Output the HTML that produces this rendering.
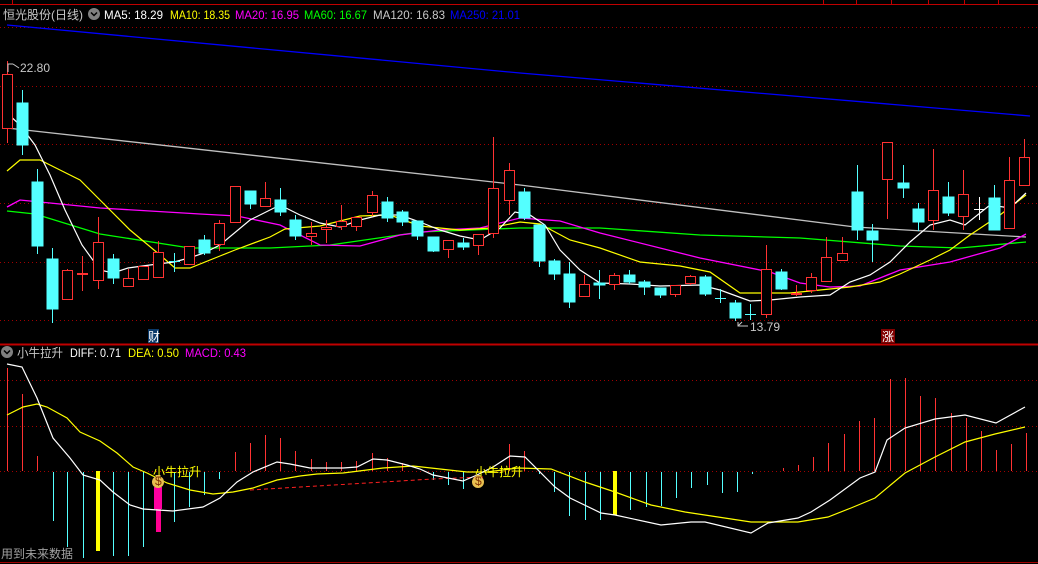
<!DOCTYPE html>
<html><head><meta charset="utf-8"><style>
html,body{margin:0;padding:0;background:#000;width:1038px;height:564px;overflow:hidden}
svg{display:block}
text{font-family:"Liberation Sans","Noto Sans CJK SC",sans-serif;font-size:12px}
</style></head><body>
<svg width="1038" height="564" viewBox="0 0 1038 564" xmlns="http://www.w3.org/2000/svg">
<rect width="1038" height="564" fill="#000"/>
<line x1="0" y1="4.5" x2="1038" y2="4.5" stroke="#c00000" stroke-width="1"/>
<g stroke="#c00000"><line x1="12.5" y1="0" x2="12.5" y2="4"/><line x1="823.5" y1="0" x2="823.5" y2="4"/><line x1="856.5" y1="0" x2="856.5" y2="4"/><line x1="891.5" y1="0" x2="891.5" y2="4"/><line x1="928.5" y1="0" x2="928.5" y2="4"/><line x1="964.5" y1="0" x2="964.5" y2="4"/><line x1="998.5" y1="0" x2="998.5" y2="4"/></g>
<line x1="0" y1="344.5" x2="1038" y2="344.5" stroke="#c00000" stroke-width="2"/>
<line x1="0" y1="562.5" x2="1038" y2="562.5" stroke="#a00000" stroke-width="1"/>
<g stroke="#a00000" stroke-dasharray="1,3" stroke-width="1">
<line x1="0" y1="27.5" x2="1038" y2="27.5"/><line x1="0" y1="86.5" x2="1038" y2="86.5"/><line x1="0" y1="144.5" x2="1038" y2="144.5"/><line x1="0" y1="203.5" x2="1038" y2="203.5"/><line x1="0" y1="262.5" x2="1038" y2="262.5"/><line x1="0" y1="320.5" x2="1038" y2="320.5"/>
<line x1="0" y1="380.5" x2="1038" y2="380.5"/><line x1="0" y1="426.5" x2="1038" y2="426.5"/><line x1="0" y1="471.5" x2="1038" y2="471.5"/>
</g>
<text x="3" y="19" fill="#c8c8c8" font-size="13" textLength="80" lengthAdjust="spacingAndGlyphs">恒光股份(日线)</text>
<circle cx="94" cy="14" r="6" fill="#808080"/><path d="M91 12.5 L94 15.5 L97 12.5" stroke="#000" stroke-width="1.5" fill="none"/>
<text x="104" y="19" fill="#fff" textLength="59" lengthAdjust="spacingAndGlyphs">MA5: 18.29</text>
<text x="170" y="19" fill="#ffff00" textLength="60" lengthAdjust="spacingAndGlyphs">MA10: 18.35</text>
<text x="235" y="19" fill="#ff00ff" textLength="64" lengthAdjust="spacingAndGlyphs">MA20: 16.95</text>
<text x="304" y="19" fill="#00ff00" textLength="63" lengthAdjust="spacingAndGlyphs">MA60: 16.67</text>
<text x="373" y="19" fill="#c8c8c8" textLength="72" lengthAdjust="spacingAndGlyphs">MA120: 16.83</text>
<text x="450" y="19" fill="#0000ff" textLength="70" lengthAdjust="spacingAndGlyphs">MA250: 21.01</text>
<polyline fill="none" stroke="#0000ff" stroke-width="1.3" points="7,25 520,73 1030,116"/>
<polyline fill="none" stroke="#c0c0c0" stroke-width="1.3" points="7,128 520,185 855,227 1026,237"/>
<polyline fill="none" stroke="#00ff00" stroke-width="1.3" points="7,211 35,214 100,234 190,248 270,248 330,245 420,232 520,228 600,228 700,235 800,238 900,246 960,248 1026,242"/>
<polyline fill="none" stroke="#ff00ff" stroke-width="1.3" points="7,207 20,200 60,204 100,208 200,214 237,216 280,225 320,245 360,246 400,235 440,230 480,228 520,218 560,221 600,233 700,258 770,272 800,283 830,287 860,286 900,270 950,262 1000,248 1026,234"/>
<polyline fill="none" stroke="#ffff00" stroke-width="1.2" points="7,171 20,160 40,160 60,170 80,180 100,200 130,230 160,255 175,268 190,268 220,256 235,250 270,237 285,229 320,226 360,216 390,215 420,226 460,230 490,228 520,222 540,224 570,240 600,248 640,262 680,266 710,272 740,293 790,293 820,290 850,287 880,282 900,274 930,260 950,250 970,235 1000,215 1026,195"/>
<polyline fill="none" stroke="#ffffff" stroke-width="1.2" points="7,113 20,125 35,145 50,175 65,210 82,245 100,270 113,273 128,268 150,265 174,262 189,258 204,253 220,245 250,220 280,205 300,215 320,223 340,227 360,220 380,215 400,215 420,222 440,230 460,236 480,240 500,228 515,212 530,215 545,225 560,250 580,270 600,283 630,284 660,286 700,285 720,290 750,301 770,300 800,297 830,295 850,282 870,275 890,262 910,242 930,225 950,220 965,225 990,205 1010,208 1026,193"/>
<g stroke="#ff3232" stroke-width="1" fill="#000">
<line x1="7.5" y1="61" x2="7.5" y2="143"/><rect x="2.5" y="74.5" width="10" height="54"/>
<line x1="67.5" y1="269" x2="67.5" y2="299"/><rect x="62.5" y="270.5" width="10" height="29"/>
<line x1="82.5" y1="256" x2="82.5" y2="291"/><rect x="77.5" y="273.5" width="10" height="1"/>
<line x1="98.5" y1="217" x2="98.5" y2="289"/><rect x="93.5" y="242.5" width="10" height="38"/>
<line x1="128.5" y1="269" x2="128.5" y2="286"/><rect x="123.5" y="278.5" width="10" height="8"/>
<rect x="138.5" y="266.5" width="10" height="13"/>
<line x1="158.5" y1="241" x2="158.5" y2="277"/><rect x="153.5" y="252.5" width="10" height="25"/>
<rect x="184.5" y="246.5" width="10" height="18"/>
<line x1="219.5" y1="220" x2="219.5" y2="251"/><rect x="214.5" y="223.5" width="10" height="21"/>
<rect x="230.5" y="186.5" width="10" height="36"/>
<line x1="265.5" y1="182" x2="265.5" y2="206"/><rect x="260.5" y="198.5" width="10" height="8"/>
<line x1="311.5" y1="222" x2="311.5" y2="245"/><rect x="306.5" y="233.5" width="10" height="3"/>
<line x1="326.5" y1="220" x2="326.5" y2="243"/><rect x="321.5" y="227.5" width="10" height="2"/>
<line x1="341.5" y1="205" x2="341.5" y2="230"/><rect x="336.5" y="221.5" width="10" height="5"/>
<line x1="356.5" y1="217" x2="356.5" y2="231"/><rect x="351.5" y="217.5" width="10" height="9"/>
<line x1="372.5" y1="191" x2="372.5" y2="216"/><rect x="367.5" y="195.5" width="10" height="17"/>
<line x1="448.5" y1="240" x2="448.5" y2="258"/><rect x="443.5" y="240.5" width="10" height="9"/>
<line x1="478.5" y1="234" x2="478.5" y2="255"/><rect x="473.5" y="234.5" width="10" height="11"/>
<line x1="493.5" y1="137" x2="493.5" y2="238"/><rect x="488.5" y="188.5" width="10" height="45"/>
<line x1="509.5" y1="163" x2="509.5" y2="215"/><rect x="504.5" y="170.5" width="10" height="30"/>
<line x1="584.5" y1="275" x2="584.5" y2="296"/><rect x="579.5" y="284.5" width="10" height="12"/>
<line x1="614.5" y1="273" x2="614.5" y2="290"/><rect x="609.5" y="275.5" width="10" height="9"/>
<line x1="675.5" y1="285" x2="675.5" y2="297"/><rect x="670.5" y="285.5" width="10" height="9"/>
<line x1="690.5" y1="275" x2="690.5" y2="285"/><rect x="685.5" y="276.5" width="10" height="7"/>
<line x1="766.5" y1="245" x2="766.5" y2="318"/><rect x="761.5" y="269.5" width="10" height="45"/>
<line x1="796.5" y1="285" x2="796.5" y2="296"/><rect x="791.5" y="293.5" width="10" height="1"/>
<line x1="811.5" y1="273" x2="811.5" y2="293"/><rect x="806.5" y="277.5" width="10" height="13"/>
<line x1="826.5" y1="237" x2="826.5" y2="281"/><rect x="821.5" y="257.5" width="10" height="24"/>
<line x1="842.5" y1="237" x2="842.5" y2="260"/><rect x="837.5" y="253.5" width="10" height="7"/>
<line x1="887.5" y1="142" x2="887.5" y2="219"/><rect x="882.5" y="142.5" width="10" height="37"/>
<line x1="933.5" y1="149" x2="933.5" y2="230"/><rect x="928.5" y="190.5" width="10" height="30"/>
<line x1="963.5" y1="170" x2="963.5" y2="230"/><rect x="958.5" y="194.5" width="10" height="22"/>
<line x1="1009.5" y1="157" x2="1009.5" y2="228"/><rect x="1004.5" y="180.5" width="10" height="48"/>
<line x1="1024.5" y1="139" x2="1024.5" y2="185"/><rect x="1019.5" y="157.5" width="10" height="28"/>
</g>
<g stroke="#54ffff" stroke-width="1" fill="#54ffff">
<line x1="22.5" y1="90" x2="22.5" y2="155"/><rect x="17" y="103" width="11" height="42"/>
<line x1="37.5" y1="169" x2="37.5" y2="254"/><rect x="32" y="182" width="11" height="64"/>
<line x1="52.5" y1="248" x2="52.5" y2="323"/><rect x="47" y="259" width="11" height="50"/>
<line x1="113.5" y1="254" x2="113.5" y2="284"/><rect x="108" y="259" width="11" height="19"/>
<line x1="174.5" y1="253" x2="174.5" y2="272"/><line x1="169" y1="261.5" x2="180" y2="261.5"/>
<line x1="204.5" y1="235" x2="204.5" y2="255"/><rect x="199" y="240" width="11" height="13"/>
<line x1="250.5" y1="191" x2="250.5" y2="209"/><rect x="245" y="191" width="11" height="13"/>
<line x1="280.5" y1="188" x2="280.5" y2="216"/><rect x="275" y="200" width="11" height="12"/>
<line x1="295.5" y1="215" x2="295.5" y2="240"/><rect x="290" y="220" width="11" height="16"/>
<line x1="387.5" y1="197" x2="387.5" y2="222"/><rect x="382" y="202" width="11" height="16"/>
<line x1="402.5" y1="210" x2="402.5" y2="226"/><rect x="397" y="212" width="11" height="10"/>
<line x1="417.5" y1="221" x2="417.5" y2="240"/><rect x="412" y="221" width="11" height="15"/>
<line x1="433.5" y1="237" x2="433.5" y2="252"/><rect x="428" y="237" width="11" height="14"/>
<line x1="463.5" y1="238" x2="463.5" y2="250"/><rect x="458" y="243" width="11" height="4"/>
<line x1="524.5" y1="188" x2="524.5" y2="220"/><rect x="519" y="192" width="11" height="26"/>
<line x1="539.5" y1="225" x2="539.5" y2="267"/><rect x="534" y="225" width="11" height="36"/>
<line x1="554.5" y1="259" x2="554.5" y2="280"/><rect x="549" y="261" width="11" height="13"/>
<line x1="569.5" y1="262" x2="569.5" y2="308"/><rect x="564" y="274" width="11" height="28"/>
<line x1="599.5" y1="270" x2="599.5" y2="299"/><rect x="594" y="283" width="11" height="2"/>
<line x1="629.5" y1="270" x2="629.5" y2="284"/><rect x="624" y="275" width="11" height="7"/>
<line x1="644.5" y1="280" x2="644.5" y2="295"/><rect x="639" y="282" width="11" height="5"/>
<line x1="660.5" y1="288" x2="660.5" y2="298"/><rect x="655" y="288" width="11" height="7"/>
<line x1="705.5" y1="275" x2="705.5" y2="296"/><rect x="700" y="277" width="11" height="17"/>
<line x1="720.5" y1="289" x2="720.5" y2="303"/><line x1="715" y1="298.5" x2="726" y2="298.5"/>
<line x1="735.5" y1="300" x2="735.5" y2="321"/><rect x="730" y="303" width="11" height="15"/>
<line x1="750.5" y1="304" x2="750.5" y2="320"/><line x1="745" y1="314.5" x2="756" y2="314.5"/>
<line x1="781.5" y1="269" x2="781.5" y2="290"/><rect x="776" y="272" width="11" height="17"/>
<line x1="857.5" y1="165" x2="857.5" y2="240"/><rect x="852" y="192" width="11" height="38"/>
<line x1="872.5" y1="224" x2="872.5" y2="262"/><rect x="867" y="231" width="11" height="9"/>
<line x1="903.5" y1="165" x2="903.5" y2="198"/><rect x="898" y="183" width="11" height="5"/>
<line x1="918.5" y1="203" x2="918.5" y2="231"/><rect x="913" y="209" width="11" height="13"/>
<line x1="948.5" y1="182" x2="948.5" y2="216"/><rect x="943" y="197" width="11" height="16"/>
<line x1="994.5" y1="185" x2="994.5" y2="230"/><rect x="989" y="198" width="11" height="32"/>
</g>
<g stroke="#fff"><line x1="979.5" y1="197" x2="979.5" y2="220"/><line x1="974" y1="209.5" x2="985" y2="209.5"/></g>
<path d="M13 64 L8 64 L8 72 M13 64 L19 68" stroke="#c8c8c8" fill="none"/>
<text x="20" y="72" fill="#c8c8c8">22.80</text>
<path d="M738 322 L738 326 L748 326 M738 326 L742 322" stroke="#c8c8c8" fill="none"/>
<text x="750" y="331" fill="#c8c8c8">13.79</text>
<rect x="148" y="329" width="11" height="14" fill="#0a3a6a"/><text x="148" y="341" fill="#fff" font-size="11">财</text>
<rect x="881" y="329" width="14" height="14" fill="#800000"/><text x="882" y="341" fill="#fff" font-size="12">涨</text>
<circle cx="7" cy="352" r="6" fill="#808080"/><path d="M4 350.5 L7 353.5 L10 350.5" stroke="#000" stroke-width="1.5" fill="none"/>
<text x="17" y="357" fill="#c8c8c8" font-size="13" textLength="46" lengthAdjust="spacingAndGlyphs">小牛拉升</text>
<text x="70" y="357" fill="#fff" textLength="51" lengthAdjust="spacingAndGlyphs">DIFF: 0.71</text>
<text x="128" y="357" fill="#ffff00" textLength="51" lengthAdjust="spacingAndGlyphs">DEA: 0.50</text>
<text x="185" y="357" fill="#ff00ff" textLength="61" lengthAdjust="spacingAndGlyphs">MACD: 0.43</text>
<g stroke="#ff3232" stroke-width="1">
<line x1="7.5" y1="368" x2="7.5" y2="471"/><line x1="22.5" y1="394" x2="22.5" y2="471"/><line x1="37.5" y1="456" x2="37.5" y2="471"/>
<line x1="235.5" y1="452" x2="235.5" y2="471"/><line x1="250.5" y1="443" x2="250.5" y2="471"/><line x1="265.5" y1="435" x2="265.5" y2="471"/><line x1="280.5" y1="438" x2="280.5" y2="471"/><line x1="295.5" y1="451" x2="295.5" y2="471"/><line x1="311.5" y1="459" x2="311.5" y2="471"/><line x1="326.5" y1="462" x2="326.5" y2="471"/><line x1="341.5" y1="462" x2="341.5" y2="471"/><line x1="356.5" y1="461" x2="356.5" y2="471"/><line x1="372.5" y1="453" x2="372.5" y2="471"/><line x1="387.5" y1="458" x2="387.5" y2="471"/><line x1="402.5" y1="463" x2="402.5" y2="471"/>
<line x1="509.5" y1="444" x2="509.5" y2="471"/><line x1="524.5" y1="451" x2="524.5" y2="471"/>
<line x1="783.5" y1="468" x2="783.5" y2="471"/><line x1="798.5" y1="465" x2="798.5" y2="471"/><line x1="813.5" y1="457" x2="813.5" y2="471"/><line x1="828.5" y1="443" x2="828.5" y2="471"/><line x1="844.5" y1="434" x2="844.5" y2="471"/><line x1="859.5" y1="421" x2="859.5" y2="471"/><line x1="874.5" y1="418" x2="874.5" y2="471"/><line x1="890.5" y1="379" x2="890.5" y2="471"/><line x1="905.5" y1="378" x2="905.5" y2="471"/><line x1="920.5" y1="396" x2="920.5" y2="471"/><line x1="935.5" y1="398" x2="935.5" y2="471"/><line x1="951.5" y1="413" x2="951.5" y2="471"/><line x1="966.5" y1="418" x2="966.5" y2="471"/><line x1="981.5" y1="431" x2="981.5" y2="471"/><line x1="996.5" y1="450" x2="996.5" y2="471"/><line x1="1011.5" y1="444" x2="1011.5" y2="471"/><line x1="1026.5" y1="433" x2="1026.5" y2="471"/>
</g>
<g stroke="#54ffff" stroke-width="1">
<line x1="53.5" y1="472" x2="53.5" y2="521"/><line x1="67.5" y1="472" x2="67.5" y2="547"/><line x1="83.5" y1="472" x2="83.5" y2="558"/><line x1="113.5" y1="472" x2="113.5" y2="556"/><line x1="128.5" y1="472" x2="128.5" y2="556"/><line x1="143.5" y1="472" x2="143.5" y2="547"/><line x1="174.5" y1="472" x2="174.5" y2="522"/><line x1="189.5" y1="472" x2="189.5" y2="507"/><line x1="204.5" y1="472" x2="204.5" y2="495"/><line x1="219.5" y1="472" x2="219.5" y2="479"/>
<line x1="433.5" y1="472" x2="433.5" y2="480"/><line x1="448.5" y1="472" x2="448.5" y2="485"/><line x1="463.5" y1="472" x2="463.5" y2="489"/>
<line x1="539.5" y1="472" x2="539.5" y2="474"/><line x1="554.5" y1="472" x2="554.5" y2="492"/><line x1="569.5" y1="472" x2="569.5" y2="516"/><line x1="585.5" y1="472" x2="585.5" y2="520"/><line x1="600.5" y1="472" x2="600.5" y2="520"/><line x1="630.5" y1="472" x2="630.5" y2="510"/><line x1="646.5" y1="472" x2="646.5" y2="507"/><line x1="661.5" y1="472" x2="661.5" y2="506"/><line x1="676.5" y1="472" x2="676.5" y2="498"/><line x1="691.5" y1="472" x2="691.5" y2="488"/><line x1="707.5" y1="472" x2="707.5" y2="485"/><line x1="722.5" y1="472" x2="722.5" y2="493"/><line x1="737.5" y1="472" x2="737.5" y2="492"/><line x1="752.5" y1="472" x2="752.5" y2="474"/>
</g>
<rect x="96" y="471" width="4" height="80" fill="#ffff00"/>
<rect x="613" y="471" width="4" height="44" fill="#ffff00"/>
<rect x="154" y="487" width="8" height="22" fill="#ff00a0"/>
<rect x="156" y="509" width="5" height="23" fill="#ff0090"/>
<polyline fill="none" stroke="#ff2020" stroke-dasharray="4,3" points="250,490 300,487 367,483 433,479 483,477"/>
<polyline fill="none" stroke="#ffff00" stroke-width="1.2" points="7,415 23,407 37,404 47,407 67,418 80,432 100,441 117,453 133,467 147,473 167,483 190,490 213,494 233,492 253,488 277,480 300,476 317,474 343,473 367,470 383,468 413,466 440,469 467,472 487,472 518,468 551,469 585,482 615,492 651,505 685,512 751,522 798,522 828,517 851,508 875,498 905,473 935,457 965,442 995,434 1025,427"/>
<polyline fill="none" stroke="#ffffff" stroke-width="1.2" points="7,364 22,367 37,398 53,438 70,458 83,475 100,480 113,492 130,505 143,509 173,511 203,507 220,498 237,482 253,472 277,462 290,464 310,468 343,468 357,467 373,459 387,460 407,465 420,469 433,475 463,481 477,475 493,467 510,456 525,457 555,487 570,498 601,513 615,515 661,525 691,522 705,522 751,533 768,523 798,518 811,512 830,500 860,478 875,472 887,440 905,428 935,419 965,415 996,423 1025,407"/>
<text x="153" y="476" fill="#ffff00" font-size="13">小牛拉升</text>
<text x="475" y="476" fill="#ffff00" font-size="13">小牛拉升</text>
<g><circle cx="158" cy="482" r="6" fill="#e8c050"/><path d="M155 475 L161 475 L159 477 L157 477 Z" fill="#e8c050"/><text x="155" y="485" fill="#803000" font-size="8">$</text></g>
<g><circle cx="478" cy="482" r="6" fill="#e8c050"/><path d="M475 475 L481 475 L479 477 L477 477 Z" fill="#e8c050"/><text x="475" y="485" fill="#803000" font-size="8">$</text></g>
<text x="1" y="558" fill="#a0a0a0" font-size="12">用到未来数据</text>
</svg>
</body></html>
